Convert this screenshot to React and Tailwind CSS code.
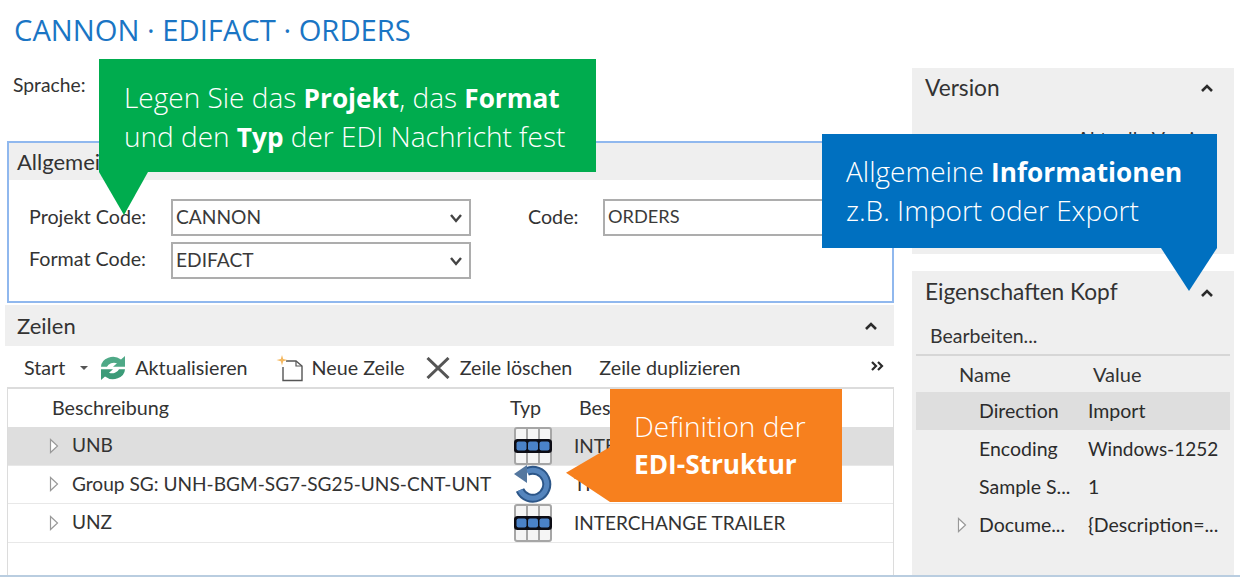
const ui = "font-['Lato','Noto_Sans',sans-serif]";

function Chevron({ className = "" }) {
  return (
    <svg width="14" height="10" viewBox="0 0 14 10" className={className}>
      <path d="M2 8 L7 3 L12 8" fill="none" stroke="#2b2b2b" strokeWidth="2.6" />
    </svg>
  );
}

function ChevronDown({ className = "" }) {
  return (
    <svg width="14" height="10" viewBox="0 0 14 10" className={className}>
      <path d="M2 2 L7 8 L12 2" fill="none" stroke="#444" strokeWidth="2.4" />
    </svg>
  );
}

function Tri() {
  return (
    <svg width="10" height="16" viewBox="0 0 10 16" className="shrink-0">
      <path d="M1.5 1.5 L8.5 8 L1.5 14.5 Z" fill="#fff" stroke="#999" strokeWidth="1.2" />
    </svg>
  );
}

function SegIcon() {
  return (
    <svg width="38" height="38" viewBox="0 0 38 38" className="block">
      <rect x="1" y="1" width="36" height="36" rx="2" fill="#f5f5f5" stroke="#a6a6a6" strokeWidth="2" />
      <path d="M13 1V37M25 1V37" stroke="#a6a6a6" strokeWidth="2" />
      <rect x="0" y="12" width="38" height="14" rx="3.5" fill="#0c0c14" />
      <rect x="2.5" y="14.5" width="10" height="9" rx="2" fill="#4a82c8" />
      <rect x="14" y="14.5" width="10" height="9" rx="2" fill="#4a82c8" />
      <rect x="25.5" y="14.5" width="10" height="9" rx="2" fill="#4a82c8" />
    </svg>
  );
}

function LoopIcon() {
  return (
    <svg width="38" height="38" viewBox="0 0 38 38" className="block">
      <path d="M13 6.5 A14 14 0 1 1 6 25" fill="none" stroke="#2c5688" strokeWidth="9" />
      <path d="M13 6.5 A14 14 0 1 1 6 25" fill="none" stroke="#5585bd" strokeWidth="5" />
      <path d="M0 9 L13 0 L13 18 Z" fill="#54779f" />
    </svg>
  );
}

function RefreshIcon() {
  return (
    <svg width="24" height="24" viewBox="3 2 18 20" preserveAspectRatio="none" className="block">
      <path d="M3 11 A9 8.5 0 0 1 18 5 L21 2 V11 H12 L15 8 A5.5 5 0 0 0 7.5 11 Z" fill="#4fa987" />
      <path d="M21 13 A9 8.5 0 0 1 6 19 L3 22 V13 H12 L9 16 A5.5 5 0 0 0 16.5 13 Z" fill="#3c9b78" />
    </svg>
  );
}

function NewIcon() {
  return (
    <svg width="28" height="28" viewBox="0 0 28 28" className="block">
      <path d="M11 7 H21 L27 12 V26.5 H8 V13" fill="#fff" stroke="#555" strokeWidth="1.4" />
      <path d="M21 7 V12 H27" fill="none" stroke="#555" strokeWidth="1.2" />
      <path d="M7 1 L8.2 5 L12.5 6 L8.2 7.2 L7 11.5 L5.8 7.2 L1.5 6 L5.8 5 Z" fill="#f4b860" />
    </svg>
  );
}

function DelIcon() {
  return (
    <svg width="24" height="22" viewBox="0 0 24 22" className="block">
      <path d="M1.5 1 L22.5 21 M22.5 1 L1.5 21" stroke="#555" strokeWidth="3" />
    </svg>
  );
}

function Field({ value }) {
  return (
    <div className="w-[300px] h-[37px] border-2 border-[#adadad] bg-white flex items-center justify-between pl-[3px] pr-[6px] text-[19.2px] text-[#3a3a3a]">
      <span className="-mt-[1px]">{value}</span>
      <ChevronDown />
    </div>
  );
}

function Row({ label, bg, icon, desc }) {
  return (
    <div className={`flex items-center h-[38.5px] border-b border-[#e8e8e8] ${bg} text-[19.1px] text-[#333]`}>
      <div className="w-[45px] pl-[41px]"><Tri /></div>
      <div className="w-[460px] pl-[19px] whitespace-nowrap">{label}</div>
      <div className="w-[40px] flex justify-center">{icon}</div>
      <div className="pl-[21px] whitespace-nowrap text-[19px]">{desc}</div>
    </div>
  );
}

function Prop({ name, value, sel, tri, valueClass = "" }) {
  return (
    <div className={`flex items-center h-[38px] ${sel ? "bg-[#dedede]" : ""} text-[19.5px] text-[#2b2b2b]`}>
      <div className="w-[42px] pl-[41px] flex items-center">{tri && <Tri />}</div>
      <div className="w-[130px] pl-[21px] whitespace-nowrap">{name}</div>
      <div className={`whitespace-nowrap ${valueClass}`}>{value}</div>
    </div>
  );
}

export default function App() {
  const callout = "absolute z-10 font-['Open_Sans',sans-serif] font-light text-white text-[28px] leading-[38px]";
  const strong = "font-bold text-[26.2px]";
  return (
    <div className={`relative w-[1240px] h-[577px] overflow-hidden bg-white flex ${ui}`}>
      <div className="w-[889px] ml-[5px] flex flex-col shrink-0">
        <div className="h-[60px] pl-[9px] pt-[10px] text-[#1a75c4] text-[29.2px] leading-[40px] font-['Open_Sans',sans-serif] whitespace-nowrap">
          CANNON · EDIFACT · ORDERS
        </div>
        <div className="h-[81px] pl-[8px] pt-[12px] text-[19.3px] leading-[26px] text-[#333]">Sprache:</div>

        <div className="ml-[2px] w-[887px] h-[162px] border-2 border-[#90b8ee]">
          <div className="h-[37px] bg-[#efefef] pl-[8px] flex items-center text-[22px] text-[#333]">Allgemein</div>
          <div className="flex pt-[19px] text-[19.7px] text-[#333]">
            <div className="flex flex-col gap-[6px]">
              <div className="flex items-center">
                <div className="w-[162px] pl-[20px] pb-[1px]">Projekt Code:</div>
                <Field value="CANNON" />
              </div>
              <div className="flex items-center">
                <div className="w-[162px] pl-[20px] pb-[3px]">Format Code:</div>
                <Field value="EDIFACT" />
              </div>
            </div>
            <div className="flex items-start">
              <div className="w-[132px] pl-[57px] leading-[35px]">Code:</div>
              <div className="w-[278px] h-[37px] border-2 border-[#adadad] pl-[3px] pb-[1px] flex items-center text-[18.2px] text-[#3a3a3a]">ORDERS</div>
            </div>
          </div>
        </div>

        <div className="mt-[2px] h-[41px] bg-[#efefef] flex items-center justify-between pl-[12px] pr-[16px] text-[22px] text-[#333]">
          <span>Zeilen</span>
          <Chevron />
        </div>

        <div className="h-[41px] pt-[3px] flex items-center text-[19.7px] text-[#333] pl-[19px] pr-[10px] whitespace-nowrap">
          <span>Start</span>
          <svg width="10" height="6" viewBox="0 0 10 6" className="ml-[14px] mr-[12px]"><path d="M1 1 H9 L5 5 Z" fill="#555" /></svg>
          <RefreshIcon />
          <span className="ml-[10px]">Aktualisieren</span>
          <span className="ml-[27px]"><NewIcon /></span>
          <span className="ml-[9px]">Neue Zeile</span>
          <span className="ml-[21px]"><DelIcon /></span>
          <span className="ml-[10px]">Zeile löschen</span>
          <span className="ml-[27px]">Zeile duplizieren</span>
          <svg width="14" height="12" viewBox="0 0 14 12" className="ml-auto -mt-[4px]"><path d="M2 2 L6 6 L2 10 M8 2 L12 6 L8 10" fill="none" stroke="#2b2b2b" strokeWidth="2.2" /></svg>
        </div>

        <div className="flex-1 ml-[2px] border-l border-r border-t-2 border-[#dcdcdc] text-[#333]">
          <div className="h-[38px] flex items-center text-[19.7px]">
            <div className="w-[459px] pl-[44px]">Beschreibung</div>
            <div className="w-[112px] pl-[43px]">Typ</div>
            <div className="whitespace-nowrap">Beschreibung</div>
          </div>
          <Row label="UNB" bg="bg-[#dedede]" icon={<SegIcon />} desc="INTERCHANGE HEADER" />
          <Row label="Group SG: UNH-BGM-SG7-SG25-UNS-CNT-UNT" bg="bg-white" icon={<LoopIcon />} desc="TRANSAKTION" />
          <Row label="UNZ" bg="bg-white" icon={<SegIcon />} desc="INTERCHANGE TRAILER" />
        </div>
      </div>

      <div className="ml-[18px] w-[322px] flex flex-col">
        <div className="mt-[68px] h-[186px] bg-[#efefef]">
          <div className="flex items-center justify-between pl-[13px] pr-[20px] h-[40px] text-[22.7px] text-[#333]">
            <span>Version</span>
            <Chevron />
          </div>
          <div className="text-right pr-[18px] pt-[16px] text-[19.5px] text-[#333]">Aktuelle Version</div>
        </div>
        <div className="mt-[17px] flex-1 bg-[#efefef]">
          <div className="flex items-center justify-between pl-[13px] pr-[20px] h-[44px] pb-[1px] text-[22.7px] text-[#333]">
            <span>Eigenschaften Kopf</span>
            <Chevron />
          </div>
          <div className="mx-[4px] h-[41px] pt-[2px] border-b-2 border-[#d6d6d6] pl-[14px] flex items-center text-[19.5px] text-[#333]">Bearbeiten...</div>
          <div className="mx-[4px]">
            <div className="h-[36px] flex items-center text-[20px] text-[#333]">
              <span className="w-[177px] pl-[43px]">Name</span>
              <span>Value</span>
            </div>
            <Prop name="Direction" value="Import" sel />
            <Prop name="Encoding" value="Windows-1252" valueClass="text-[19px]" />
            <Prop name="Sample S..." value="1" />
            <Prop name="Docume..." value="{Description=..." tri />
          </div>
        </div>
      </div>

      <div className="absolute left-0 right-0 bottom-0 h-[2px] bg-[#b9cde0]" />

      <div className={`${callout} left-[99px] top-[59px] w-[497px] h-[113px] bg-[#00ac4e] pl-[25px] pt-[19px]`}>
        <div className="whitespace-nowrap">Legen Sie das <b className={strong}>Projekt</b>, das <b className={strong}>Format</b></div>
        <div className="whitespace-nowrap">und den <b className={strong}>Typ</b> der EDI Nachricht fest</div>
        <div className="absolute left-0 top-[113px] w-[49px] h-[43px] bg-[#00ac4e] [clip-path:polygon(0_0,100%_0,51%_100%)]" />
      </div>

      <div className={`${callout} left-[822px] top-[134px] w-[395px] h-[114px] bg-[#0070c0] pl-[24px] pt-[18px]`}>
        <div className="whitespace-nowrap">Allgemeine <b className={strong}>Informationen</b></div>
        <div className="whitespace-nowrap">z.B. Import oder Export</div>
        <div className="absolute right-0 top-[114px] w-[56px] h-[43px] bg-[#0070c0] [clip-path:polygon(0_0,100%_0,50%_100%)]" />
      </div>

      <div className={`${callout} left-[610px] top-[389px] w-[232px] h-[113px] bg-[#f7801e] pl-[24px] pt-[18px]`}>
        <div className="whitespace-nowrap">Definition der</div>
        <div className={`whitespace-nowrap ${strong}`}>EDI-Struktur</div>
        <div className="absolute right-[232px] top-[58px] w-[44px] h-[55px] bg-[#f7801e] [clip-path:polygon(100%_0,100%_100%,0_47%)]" />
      </div>
    </div>
  );
}
